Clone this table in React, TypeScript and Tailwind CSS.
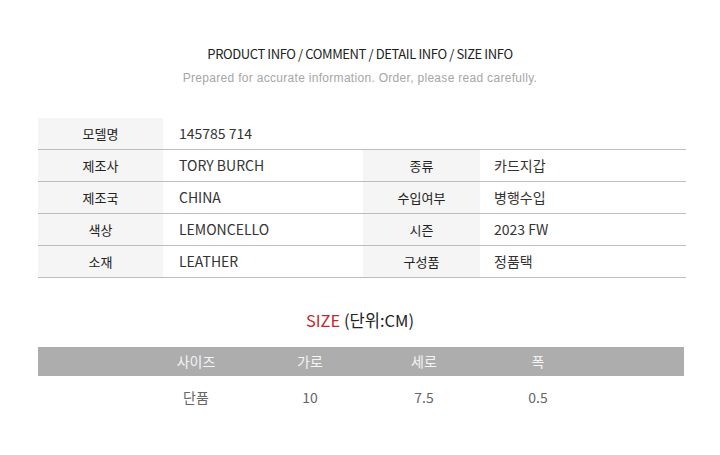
import React from 'react';

type Cell = { label: string; value: string };

const rows: { left: Cell; right?: Cell }[] = [
  { left: { label: '모델명', value: '145785 714' } },
  { left: { label: '제조사', value: 'TORY BURCH' }, right: { label: '종류', value: '카드지갑' } },
  { left: { label: '제조국', value: 'CHINA' }, right: { label: '수입여부', value: '병행수입' } },
  { left: { label: '색상', value: 'LEMONCELLO' }, right: { label: '시즌', value: '2023 FW' } },
  { left: { label: '소재', value: 'LEATHER' }, right: { label: '구성품', value: '정품택' } },
];

const sizeHead = ['사이즈', '가로', '세로', '폭'];
const sizeRow = ['단품', '10', '7.5', '0.5'];

export default function App() {
  return (
    <div className="w-[720px] h-[455px] bg-white font-['Noto_Sans_CJK_KR',sans-serif] overflow-hidden">
      <div className="pt-[45px] text-center">
        <h1 className="h-[18px] leading-[18px] text-[13px] font-normal text-[#222] tracking-[-0.4px]">
          PRODUCT INFO / COMMENT / DETAIL INFO / SIZE INFO
        </h1>
        <p className="mt-[6px] h-[18px] leading-[18px] text-[12px] text-[#a6a6a6] tracking-[0.3px] font-['Liberation_Sans',sans-serif]">
          Prepared for accurate information. Order, please read carefully.
        </p>
      </div>

      <div className="ml-[38px] mt-[31px] w-[648px]">
        {rows.map((r, i) => (
          <div key={i} className="flex h-[32px] border-b border-[#bdbdbd]">
            <div className="w-[125px] flex items-center justify-center bg-[#f5f5f5] text-[13px] text-[#222]">
              {r.left.label}
            </div>
            <div className={`${r.right ? 'w-[200px]' : 'flex-1'} flex items-center pl-4 text-[14px] text-[#333]`}>
              {r.left.value}
            </div>
            {r.right && (
              <>
                <div className="w-[117px] flex items-center justify-center bg-[#f5f5f5] text-[13px] text-[#222]">
                  {r.right.label}
                </div>
                <div className="flex-1 flex items-center pl-[14px] text-[14px] text-[#333]">
                  {r.right.value}
                </div>
              </>
            )}
          </div>
        ))}
      </div>

      <div className="mt-[31px] h-[22px] leading-[22px] text-center text-[16.5px] text-[#222]">
        <span className="text-[#c8262c]">SIZE</span> (단위:CM)
      </div>

      <div className="ml-[38px] mt-[16px] w-[646px]">
        <div className="flex h-[29px] items-center bg-[#adadad] pl-[101px] text-[14px] text-[#f4f4f4]">
          {sizeHead.map((h) => (
            <div key={h} className="w-[114px] text-center">{h}</div>
          ))}
        </div>
        <div className="flex h-[42px] items-center pl-[101px] text-[14px] text-[#666]">
          {sizeRow.map((v) => (
            <div key={v} className="w-[114px] text-center">{v}</div>
          ))}
        </div>
      </div>
    </div>
  );
}
